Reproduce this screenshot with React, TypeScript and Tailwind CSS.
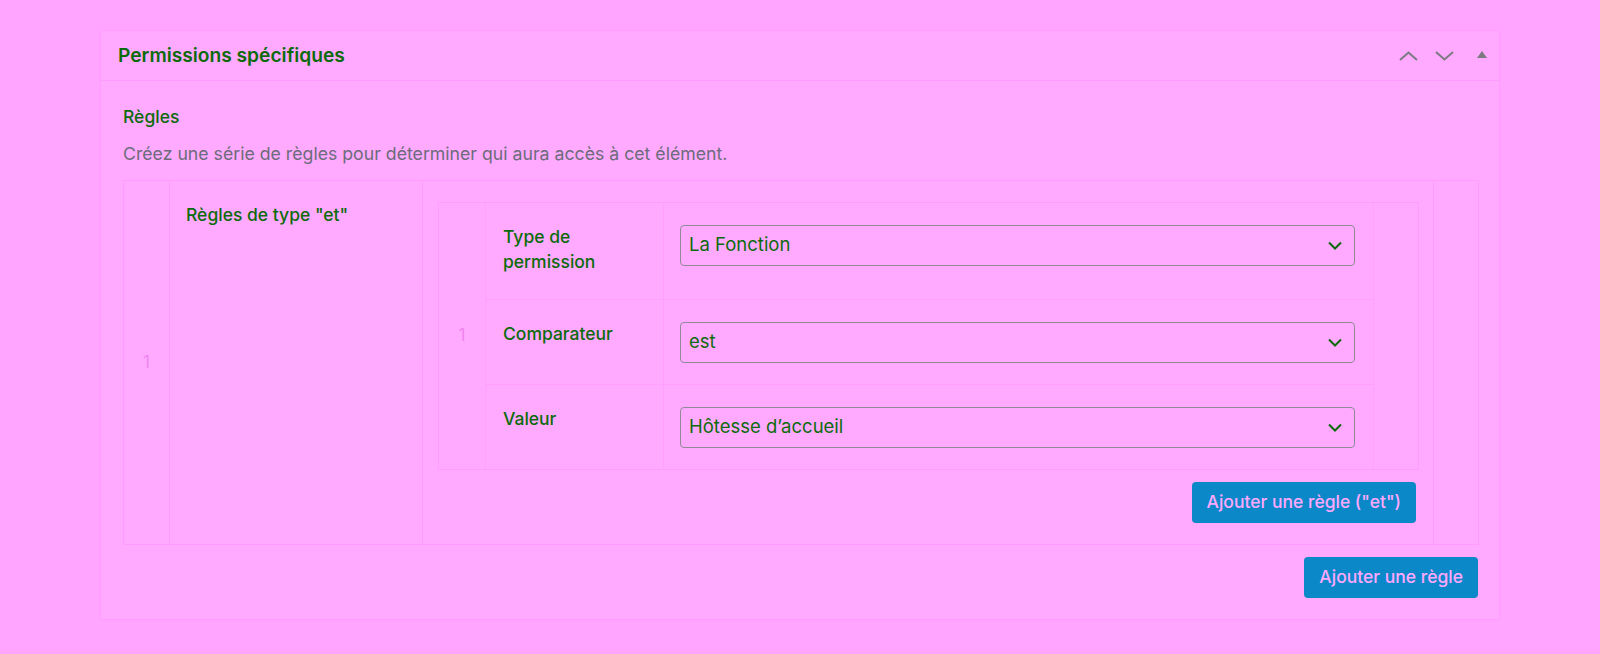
import type { ReactNode } from "react";

const font = { fontFamily: 'Inter, "Liberation Sans", Arial, sans-serif' };

function Chevron({ up = false }: { up?: boolean }) {
  return (
    <svg width="19" height="10" viewBox="0 0 19 10" fill="none">
      <path d={up ? "M1 9 L9.5 1.5 L18 9" : "M1 1 L9.5 8.5 L18 1"} stroke="currentColor" strokeWidth="2" />
    </svg>
  );
}

function Select({ value }: { value: string }) {
  return (
    <div className="flex h-[41px] w-full items-center justify-between rounded-[4px] border border-[#8f8a96] bg-[#ffaaff] pl-[8px] pr-[12px] text-[18.5px] text-[#0b6b0b]">
      <span>{value}</span>
      <svg width="14" height="9" viewBox="0 0 14 9" fill="none">
        <path d="M1 1.5 L7 7.5 L13 1.5" stroke="currentColor" strokeWidth="2" />
      </svg>
    </div>
  );
}

function Row({ label, children, last = false, height }: { label: ReactNode; children: ReactNode; last?: boolean; height: string }) {
  return (
    <div className={`flex ${height} ${last ? "" : "border-b border-[#ffa0ff]"}`}>
      <div className="w-[178px] shrink-0 border-r border-[#ffa0ff] pl-[17px] pt-[21px] text-[17.5px] font-medium leading-[25.5px] text-[#0b6b0b]">
        {label}
      </div>
      <div className="flex-1 pl-[16px] pr-[18px] pt-[22px]">{children}</div>
    </div>
  );
}

const buttonClassName =
  "h-[41px] rounded-[4px] bg-[#0a88c8] px-[15px] text-[17.5px] font-medium text-[#ffa8ff]";

export default function App() {
  return (
    <div className="min-h-[654px] w-full bg-[#ffa5ff] pl-[100px] pt-[30px]" style={font}>
      <div className="w-[1400px] border border-[#ff9cff] bg-[#ffaaff]">
        {/* header */}
        <div className="flex h-[50px] items-center justify-between border-b border-[#ff9cff] pl-[17px] pr-[12px]">
          <h2 className="text-[19.2px] font-semibold text-[#0b6b0b]">Permissions spécifiques</h2>
          <div className="flex items-center text-[#7a7a80]">
            <Chevron up />
            <span className="ml-[17px]">
              <Chevron />
            </span>
            <svg width="10" height="7" viewBox="0 0 10 7" className="ml-[23px] mb-[3px]">
              <path d="M0 7 L5 0 L10 7 Z" fill="currentColor" />
            </svg>
          </div>
        </div>

        {/* body */}
        <div className="pl-[22px] pr-[20px] pb-[21px] pt-[23px]">
          <div className="text-[17.5px] font-medium text-[#0b6b0b]">Règles</div>
          <p className="mt-[11px] text-[17.7px] text-[#6c6c7a]">
            Créez une série de règles pour déterminer qui aura accès à cet élément.
          </p>

          <div className="mt-[12px] flex h-[365px] border border-[#ff9dff]">
            <div className="flex w-[46px] shrink-0 items-center justify-center border-r border-[#ff9dff] text-[17px] text-[#ee86ee]">
              1
            </div>
            <div className="w-[253px] shrink-0 border-r border-[#ff9dff] pl-[16px] pt-[21px] text-[17.5px] font-medium text-[#0b6b0b]">
              Règles de type "et"
            </div>
            <div className="flex flex-1 flex-col pl-[15px] pr-[14px] pt-[21px]">
              <div className="flex h-[268px] border border-[#ff9dff]">
                <div className="flex w-[47px] shrink-0 items-center justify-center border-r border-[#ffa0ff] text-[17px] text-[#ee86ee]">
                  1
                </div>
                <div className="flex flex-1 flex-col">
                  <Row label={<>Type de<br />permission</>} height="h-[97px]">
                    <Select value="La Fonction" />
                  </Row>
                  <Row label="Comparateur" height="h-[85px]">
                    <Select value="est" />
                  </Row>
                  <Row label="Valeur" height="h-[84px]" last>
                    <Select value="Hôtesse d’accueil" />
                  </Row>
                </div>
                <div className="w-[45px] shrink-0 border-l border-[#ffa0ff]" />
              </div>
              <div className="mt-[12px] flex justify-end pr-[3px]">
                <button className={buttonClassName}>Ajouter une règle ("et")</button>
              </div>
            </div>
            <div className="w-[45px] shrink-0 border-l border-[#ff9dff]" />
          </div>

          <div className="mt-[12px] flex justify-end pr-[1px]">
            <button className={buttonClassName}>Ajouter une règle</button>
          </div>
        </div>
      </div>
    </div>
  );
}
